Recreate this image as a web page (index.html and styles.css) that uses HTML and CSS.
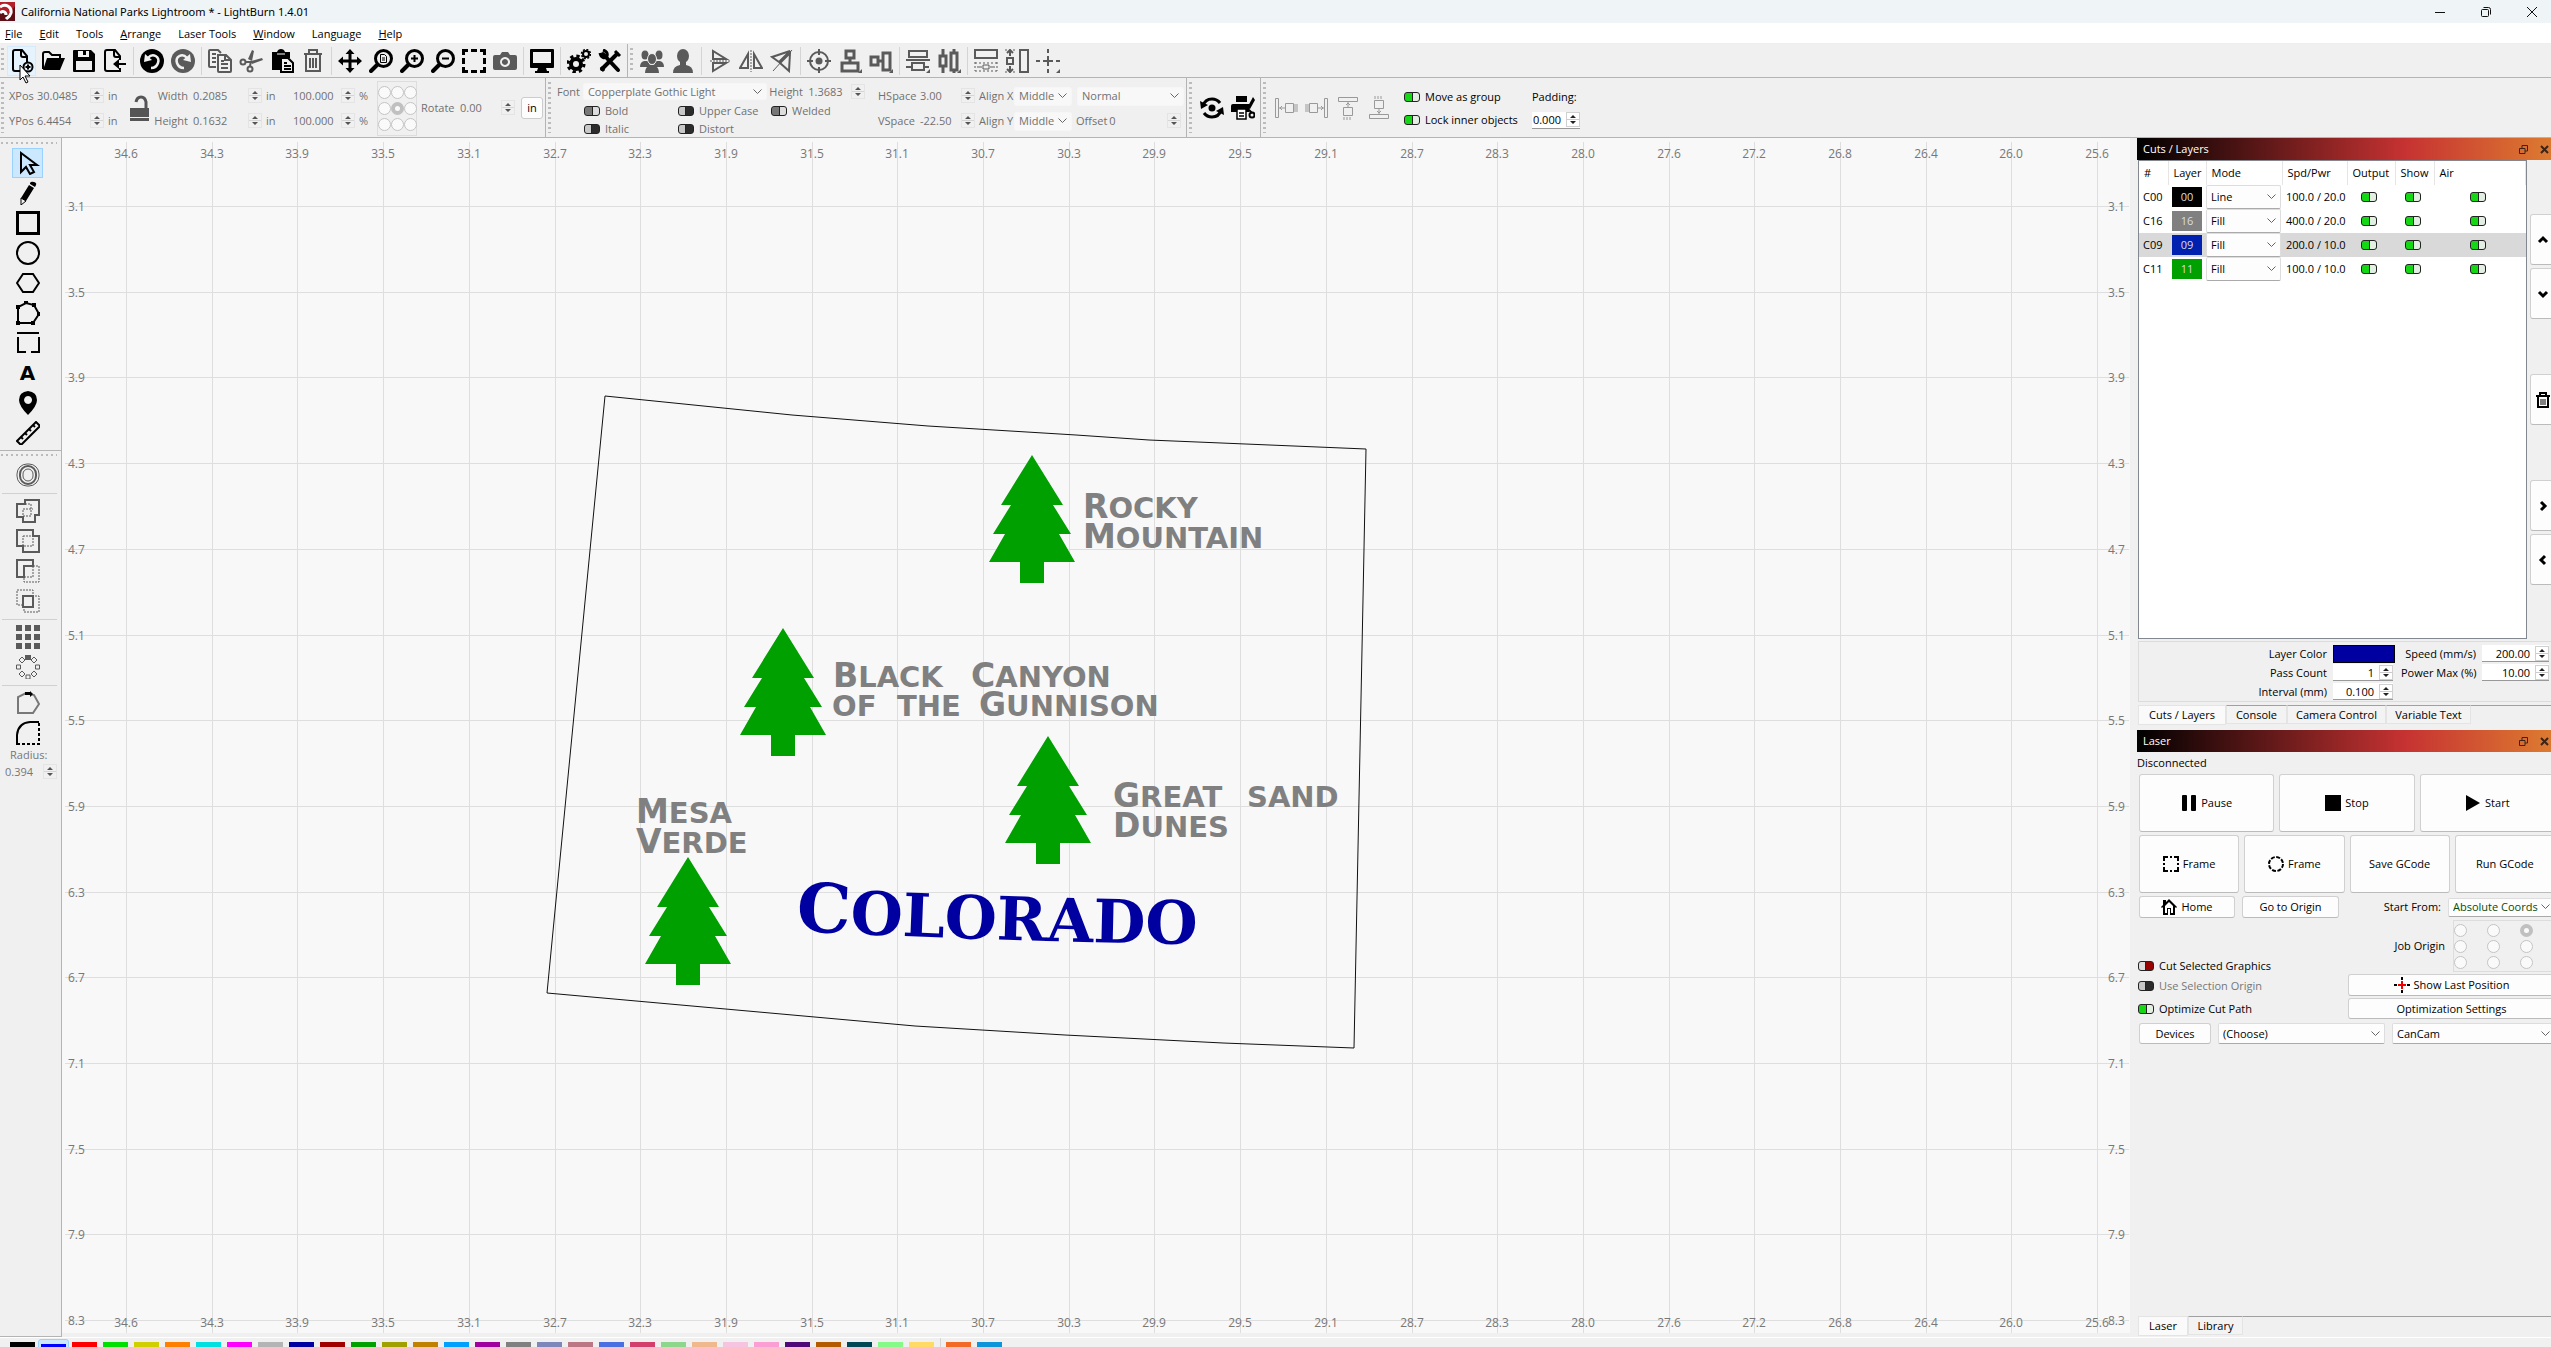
FILE: index.html
```html
<!DOCTYPE html>
<html lang="en">
<head>
<meta charset="utf-8">
<title>California National Parks Lightroom * - LightBurn 1.4.01</title>
<link rel="stylesheet" href="styles.css">
</head>
<body>
<div class="app">
  <header class="titlebar">
    <svg class="logo" width="15" height="19" viewBox="0 0 15 19"><path fill="#b3202c" d="M0 0h15v19H0z"/><path fill="#5e0f17" d="M0 10l8 3 7-9v15H0z"/><path fill="none" stroke="#fff" stroke-width="3" d="M0 5c6-4 12 0 11 6-1 4-4 5-5 6M0 11c3-3 6-1 6 2"/></svg>
    <h1 class="title">California National Parks Lightroom * - LightBurn 1.4.01</h1>
    <div class="winctl">
      <button aria-label="Minimize"><svg width="12" height="12" viewBox="0 0 12 12"><path stroke="#111" d="M1 6.5h10"/></svg></button>
      <button aria-label="Restore"><svg width="12" height="12" viewBox="0 0 12 12" fill="none" stroke="#111"><rect x="1.5" y="3.5" width="7" height="7" rx="1"/><path d="M3.500 1.500h5a2 2 0 0 1 2 2v5"/></svg></button>
      <button aria-label="Close"><svg width="12" height="12" viewBox="0 0 12 12"><path stroke="#111" d="M1 1l10 10M11 1L1 11"/></svg></button>
    </div>
  </header>

  <nav class="menubar">
    <a href="#"><u>F</u>ile</a><a href="#"><u>E</u>dit</a><a href="#">Tools</a><a href="#"><u>A</u>rrange</a><a href="#">Laser Tools</a><a href="#"><u>W</u>indow</a><a href="#">Language</a><a href="#"><u>H</u>elp</a>
  </nav>

  <div class="toolbar">
    <div class="group">
      <i class="grip"></i>
      <button class="tool hot" aria-label="New"><svg viewBox="0 0 24 24"><path class="ln" d="M12 22H5a2 2 0 0 1-2-2V3a2 2 0 0 1 2-2h7l5 6v6M11 1v5a2 2 0 0 0 2 2h4"/><circle class="ln" cx="18" cy="18" r="4.500"/><path class="ln" d="M18 15.500v5M15.500 18h5"/></svg></button>
      <button class="tool" aria-label="Open"><svg viewBox="0 0 24 24"><path class="ln" d="M2 20V5q0-2 2-2h4l3 3h8v4"/><path d="M2 21L6 9h18l-5 12z"/></svg></button>
      <button class="tool" aria-label="Save"><svg viewBox="0 0 24 24"><path fill-rule="evenodd" d="M2 1h17l4 4v17q0 1-1 1H2q-1 0-1-1V2q0-1 1-1zM6 2v6h11V2h-3v4h-3V2zM4 12v9h16v-9z"/></svg></button>
      <button class="tool" aria-label="Export"><svg viewBox="0 0 24 24"><path class="ln" d="M17 11V7l-5-6H4a2 2 0 0 0-2 2v17a2 2 0 0 0 2 2h13v-3M11 1v5a2 2 0 0 0 2 2h4"/><path d="M23 14h-7v-4l-6 5 6 5v-4h7z"/></svg></button>
      <i class="sep"></i>
      <button class="tool" aria-label="Undo"><svg viewBox="0 0 24 24"><circle cx="12" cy="12" r="12"/><path fill="none" stroke="#f0f0f0" stroke-width="2.500" d="M8 9c5-6 12-1 10 5-1 3-4 5-7 5"/><path fill="#f0f0f0" d="M4 13l1-8 7 6z"/></svg></button>
      <button class="tool dim" aria-label="Redo"><svg viewBox="0 0 24 24"><circle cx="12" cy="12" r="12"/><path fill="none" stroke="#f0f0f0" stroke-width="2.500" d="M16 9C11 3 4 8 6 14c1 3 4 5 7 5"/><path fill="#f0f0f0" d="M20 13l-1-8-7 6z"/></svg></button>
      <i class="sep"></i>
      <button class="tool dim" aria-label="Copy"><svg viewBox="0 0 24 24"><path class="ln" d="M8 18H2a1 1 0 0 1-1-1V2a1 1 0 0 1 1-1h8l3 3M4 5h4M4 9h4M4 13h4M10 6h8l5 5v11a1 1 0 0 1-1 1H11a1 1 0 0 1-1-1zM17 6v5h5M13 12h3M13 15h7M13 19h7"/></svg></button>
      <button class="tool dim" aria-label="Cut"><svg viewBox="0 0 24 24"><circle class="ln" cx="4" cy="13" r="2.500"/><circle class="ln" cx="11" cy="20" r="2.500"/><path class="ln" d="M6 13l7 0M11 17l1-5"/><path d="M9 10L13 1l2 1-2 10zM12 12l11-3 1 2-11 4z"/></svg></button>
      <button class="tool" aria-label="Paste"><svg viewBox="0 0 24 24"><path d="M2 3h5q1-3 4-3t4 3h5v6h-9v12H2z"/><path fill="#f0f0f0" stroke="#000" stroke-width="2" d="M11 9h7l5 5v9H11z"/><path class="ln" d="M14 14h3M14 17h7M14 20h7"/><path stroke="#fff" d="M7 5h8"/></svg></button>
      <button class="tool dim" aria-label="Delete"><svg viewBox="0 0 24 24"><path class="ln" d="M3 5h18M8 4V1h8v3M5 6v16h14V6M9 9v10M12 9v10M15 9v10"/></svg></button>
      <i class="sep"></i>
      <button class="tool" aria-label="Pan"><svg viewBox="0 0 24 24"><path d="M12 0l4.500 5H13.500v5.500H19V7.500l5 4.500-5 4.500v-3h-5.500V19h3L12 24l-4.500-5h3v-5.500H5v3L0 12l5-4.500v3h5.500V5h-3z"/></svg></button>
      <button class="tool" aria-label="Zoom to page"><svg viewBox="0 0 24 24"><circle class="ln3" cx="14.500" cy="9.500" r="8"/><path class="ln4" d="M8 16l-6 6"/><path class="ln1" d="M11.500 5.500h4l2 2v6h-6zM13 9h3M13 11h3"/></svg></button>
      <button class="tool" aria-label="Zoom in"><svg viewBox="0 0 24 24"><circle class="ln3" cx="14.500" cy="9.500" r="8"/><path class="ln4" d="M8 16l-6 6"/><path class="ln" d="M14.500 6v7M11 9.500h7"/></svg></button>
      <button class="tool" aria-label="Zoom out"><svg viewBox="0 0 24 24"><circle class="ln3" cx="14.500" cy="9.500" r="8"/><path class="ln4" d="M8 16l-6 6"/><path class="ln" d="M11 9.500h7"/></svg></button>
      <button class="tool" aria-label="Frame selection"><svg viewBox="0 0 24 24"><path class="ln3" d="M1.500 6V1.500H6M18 1.500h4.500V6M22.500 18v4.500H18M6 22.500H1.500V18M9 1.500h6M9 22.500h6M1.500 9v6M22.500 9v6"/></svg></button>
      <button class="tool dim" aria-label="Camera capture"><svg viewBox="0 0 24 24"><path fill-rule="evenodd" d="M2 6h5l2-3h6l2 3h5q2 0 2 2v11q0 2-2 2H2q-2 0-2-2V8q0-2 2-2zm10 2a5 5 0 1 0 .1 0zm0 2a3 3 0 1 1-.1 0z"/></svg></button>
      <i class="sep"></i>
      <button class="tool" aria-label="Preview"><svg viewBox="0 0 24 24"><path fill-rule="evenodd" d="M1 0h22q1 0 1 1v17q0 1-1 1h-7l1 3h2v2H5v-2h2l1-3H1q-1 0-1-1V1q0-1 1-1zm2 3v11h18V3z"/></svg></button>
      <i class="sep"></i>
      <button class="tool" aria-label="Settings"><svg viewBox="0 0 24 24"><circle cx="9" cy="15" r="5" fill="none" stroke="#000" stroke-width="4"/><circle cx="9" cy="15" r="8" fill="none" stroke="#000" stroke-width="3" stroke-dasharray="3.300 3"/><circle cx="19" cy="5" r="3" class="ln"/><circle cx="19" cy="5" r="4.500" fill="none" stroke="#000" stroke-width="1.500" stroke-dasharray="2 1.500"/></svg></button>
      <button class="tool" aria-label="Device settings"><svg viewBox="0 0 24 24"><path class="ln4" d="M5 5l15 16M19 5L4 20"/><path class="ln3" d="M2 4c1 5 5 6 7 3 1-3-1-5-4-6"/><path class="ln3" d="M17 2l5 5M3 18l3 4"/></svg></button>
    </div>
    <div class="group">
      <i class="grip"></i>
      <button class="tool dim" aria-label="Group"><svg viewBox="0 0 24 24"><ellipse cx="5" cy="6" rx="3.500" ry="4.500"/><ellipse cx="19" cy="6" rx="3.500" ry="4.500"/><path d="M0 18q0-5 4-6l4 0 3 6zM24 18q0-5-4-6l-4 0-3 6z"/><ellipse cx="12" cy="10" rx="4.500" ry="5.500" stroke="#f0f0f0"/><path d="M5 24q0-6 5-8h4q5 2 5 8z"/></svg></button>
      <button class="tool dim" aria-label="Ungroup"><svg viewBox="0 0 24 24"><ellipse cx="12" cy="7" rx="6" ry="7"/><path d="M2 24q0-7 7-8V12h6v4q7 1 7 8z"/></svg></button>
      <i class="sep"></i>
      <button class="tool dim" aria-label="Flip vertical"><svg viewBox="0 0 24 24"><path class="ln" d="M5 2v8h13zM5 22v-8h13z"/><path class="ln1" stroke-dasharray="2 1" d="M2 12h20"/></svg></button>
      <button class="tool dim" aria-label="Flip horizontal"><svg viewBox="0 0 24 24"><path class="ln" d="M1 19h8V5zM23 19h-8V5z"/><path class="ln1" stroke-dasharray="2 1" d="M12 1v22"/></svg></button>
      <button class="tool dim" aria-label="Mirror across line"><svg viewBox="0 0 24 24"><path class="ln" d="M2 8L20 2 9 13zM20 4l-1 18-9-8z"/><path class="ln1" d="M3 22L22 1"/></svg></button>
      <i class="sep"></i>
      <button class="tool dim" aria-label="Align centers"><svg viewBox="0 0 24 24"><circle class="ln" cx="12" cy="12" r="9"/><circle cx="12" cy="12" r="3.500"/><path class="ln" d="M12 0v6M12 18v6M0 12h6M18 12h6"/></svg></button>
      <button class="tool dim" aria-label="Align vertical centers"><svg viewBox="0 0 24 24"><path class="ln3" d="M8 2h8v7H8zM4 14h16v8H4zM12 9v5"/><path d="M24 20v4h-4z"/></svg></button>
      <button class="tool dim" aria-label="Align horizontal centers"><svg viewBox="0 0 24 24"><path class="ln3" d="M2 8h7v8H2zM14 4h7v17h-7zM9 12h5"/><path d="M24 20v4h-4z"/></svg></button>
      <i class="sep"></i>
      <button class="tool dim" aria-label="Distribute vertically"><svg viewBox="0 0 24 24"><path class="ln" d="M3 2h18v6H3zM6 14h12v7H6zM0 11h24M0 18h6M18 18h5"/><path d="M24 20v4h-4z"/></svg></button>
      <button class="tool dim" aria-label="Distribute horizontally"><svg viewBox="0 0 24 24"><path class="ln3" d="M3 7h6v10H3zM14 4h6v17h-6zM6 0v7M6 17v7M17 0v4M17 21v3"/><path d="M24 20v4h-4z"/></svg></button>
      <i class="sep"></i>
      <button class="tool dim" aria-label="Make same width"><svg viewBox="0 0 24 24"><path class="ln" d="M1 1h22v8H1z"/><path class="ln1" stroke-dasharray="2 2" d="M1 13v9M23 13v9M1 22h22M1 14h22"/><path class="ln1" d="M9 16h6v4H9zM3 18h5M16 18h5"/></svg></button>
      <button class="tool dim" aria-label="Make same height"><svg viewBox="0 0 24 24"><path class="ln" d="M15 1h8v22h-8z"/><path class="ln" d="M5 1v6M5 17v6M2 9h6v6H2zM2 4l3-3 3 3M2 20l3 3 3-3"/><path class="ln1" stroke-dasharray="2 2" d="M0 1h11M0 23h11"/></svg></button>
      <button class="tool dim" aria-label="Move to position"><svg viewBox="0 0 24 24"><path class="ln" d="M12 0v4M12 20v4M0 12h4M20 12h4M12 7v10M7 12h10"/><path d="M24 20v4h-4z"/></svg></button>
    </div>
  </div>

  <div class="toolbar numeric">
    <div class="group">
      <i class="grip"></i>
      <div class="transform">
        <label for="xpos">XPos</label><span class="num off"><input id="xpos" value="30.0485"><i class="step"></i></span><span class="unit">in</span>
        <button class="lock" aria-label="Lock aspect"><svg width="20" height="26" viewBox="0 0 20 26"><path fill="none" stroke="#555" stroke-width="3" d="M6 7q1-5 5-5t5 5v6"/><path fill="#555" d="M0 13h19v9H0zM0 23h19v3H0z"/></svg></button>
        <label class="r" for="wid">Width</label><span class="num off pad"><input id="wid" value="0.2085"><i class="step"></i></span><span class="unit">in</span>
        <span class="num off"><input aria-label="Width percent" value="100.000"><i class="step"></i></span><span class="unit">%</span>
        <fieldset class="anchor"><input type="radio" name="a" aria-label="Top left"><input type="radio" name="a" aria-label="Top"><input type="radio" name="a" aria-label="Top right"><input type="radio" name="a" aria-label="Left"><input type="radio" name="a" aria-label="Center" checked><input type="radio" name="a" aria-label="Right"><input type="radio" name="a" aria-label="Bottom left"><input type="radio" name="a" aria-label="Bottom"><input type="radio" name="a" aria-label="Bottom right"></fieldset>
        <label class="rot" for="rot">Rotate</label><span class="num off tall"><input id="rot" value="0.00"><i class="step"></i></span>
        <button class="inch">in</button>
        <label class="c1" for="ypos">YPos</label><span class="num off"><input id="ypos" value="6.4454"><i class="step"></i></span><span class="unit">in</span>
        <label class="c5 r" for="hei">Height</label><span class="num off pad"><input id="hei" value="0.1632"><i class="step"></i></span><span class="unit">in</span>
        <span class="num off"><input aria-label="Height percent" value="100.000"><i class="step"></i></span><span class="unit">%</span>
      </div>
    </div>
    <div class="group">
      <i class="grip"></i>
      <div class="fontbox">
        <div class="fontrow"><label for="font">Font</label><select id="font" class="wide"><option>Copperplate Gothic Light</option></select><label for="fh">Height</label><span class="num off"><input id="fh" value="1.3683"><i class="step"></i></span></div>
        <div class="switches">
          <label><input type="checkbox" class="sw half" checked>Bold</label><label><input type="checkbox" class="sw">Upper Case</label><label><input type="checkbox" class="sw half" checked>Welded</label>
          <label><input type="checkbox" class="sw">Italic</label><label><input type="checkbox" class="sw">Distort</label>
        </div>
      </div>
      <div class="spacing">
        <label for="hs">HSpace</label><span class="num off"><input id="hs" value="3.00"><i class="step"></i></span><label for="ax">Align X</label><select id="ax"><option>Middle</option></select><select aria-label="Text mode" class="pad"><option>Normal</option></select>
        <label for="vs">VSpace</label><span class="num off"><input id="vs" value="-22.50"><i class="step"></i></span><label for="ay">Align Y</label><select id="ay"><option>Middle</option></select><span class="offset"><label for="of">Offset</label><span class="num off"><input id="of" value="0"><i class="step"></i></span></span>
      </div>
    </div>
    <div class="group">
      <i class="grip"></i>
      <div class="pair">
        <button class="tool" aria-label="Rotary"><svg viewBox="0 0 24 24"><circle cx="12" cy="12" r="3.500"/><path class="ln3" d="M3 10q2-7 9-7 5 0 8 4M21 14q-2 7-9 7-5 0-8-4"/><path d="M0 5l1 8 7-4zM24 19l-1-8-7 4z"/></svg></button>
        <button class="tool" aria-label="Print and cut"><svg viewBox="0 0 24 24"><path d="M5 0h11v6H5zM2 8h16v8H0v-6q0-2 2-2z"/><path fill="#fff" stroke="#000" stroke-width="1.500" d="M6 13h9v10H6zM8 17h5M8 20h5"/><path d="M22 1l2 3-5 9-3-1z"/><path class="ln" d="M17 13l4 4"/><circle class="ln" cx="21" cy="19" r="2.500"/></svg></button>
      </div>
    </div>
    <div class="group dock">
      <i class="grip"></i>
      <div class="aligns">
        <button class="tool faint" aria-label="Move to left"><svg viewBox="0 0 24 24"><path class="ln1" d="M1.500 2.500h3v19h-3zM11.500 7.500h8v9h-8zM5 12h6M6 12l2-2M6 12l2 2M21 8v8M23 8v8"/></svg></button>
        <button class="tool faint" aria-label="Move to right"><svg viewBox="0 0 24 24"><path class="ln1" d="M19.500 2.500h3v19h-3zM4.500 7.500h8v9h-8zM13 12h6M18 12l-2-2M18 12l-2 2M3 8v8M1 8v8"/></svg></button>
        <button class="tool faint" aria-label="Move to top"><svg viewBox="0 0 24 24"><path class="ln1" d="M2.500 1.500h19v4h-19zM7.500 11.500h9v8h-9zM12 6v5M12 7l-2 2M12 7l2 2M8 21v3M11 21v3M14 21v3"/></svg></button>
        <button class="tool faint" aria-label="Move to bottom"><svg viewBox="0 0 24 24"><path class="ln1" d="M2.500 18.500h19v4h-19zM7.500 4.500h9v8h-9zM12 13v5M12 17l-2-2M12 17l2-2M8 0v3M11 0v3M14 0v3"/></svg></button>
      </div>
      <div class="groupopts">
        <label><input type="checkbox" class="sw on" checked>Move as group</label>
        <label><input type="checkbox" class="sw on" checked>Lock inner objects</label>
      </div>
      <div class="padding"><label for="pd">Padding:</label><span class="num"><input id="pd" value="0.000"><i class="step"></i></span></div>
    </div>
  </div>

  <main class="work">
    <aside class="palette">
      <i class="hgrip"></i>
      <button class="tool active" aria-label="Select"><svg viewBox="0 0 24 24"><path class="ln" d="M5 2v19l5-5 4 7 4-2-4-7h7z"/></svg></button>
      <button class="tool" aria-label="Draw lines"><svg viewBox="0 0 24 24"><path d="M13 4l5 3-8 13-5-3zM14 2q1-2 4-1 3 1 2 3l-1 2-5-3z"/><path class="ln1" d="M5 17l5 3-5 4z"/></svg></button>
      <button class="tool" aria-label="Rectangle"><svg viewBox="0 0 24 24"><path class="ln3" d="M1.500 1.500h21v21h-21z"/></svg></button>
      <button class="tool" aria-label="Ellipse"><svg viewBox="0 0 24 24"><ellipse class="ln" cx="12" cy="12" rx="11" ry="11"/></svg></button>
      <button class="tool" aria-label="Polygon"><svg viewBox="0 0 24 24"><path class="ln" d="M1 12l6-9h10l6 9-6 9H7z"/></svg></button>
      <button class="tool" aria-label="Edit nodes"><svg viewBox="0 0 24 24"><path class="ln" d="M2 22V6l8-4 8 2 5 9-6 9z"/><path d="M0 4h4v4H0zM8 0h4v3H8zM16 2h4v4h-4zM21 11h3v4h-3zM0 20h4v4H0zM15 20h4v4h-4z"/></svg></button>
      <button class="tool" aria-label="Edit tabs"><svg viewBox="0 0 24 24"><path class="ln" d="M1 2h22M2 6v15h8M23 6v15h-8"/></svg></button>
      <button class="tool glyph" aria-label="Text">A</button>
      <button class="tool" aria-label="Position laser"><svg viewBox="0 0 24 24"><path fill-rule="evenodd" d="M12 0q9 1 9 9 0 6-9 15Q3 15 3 9q0-8 9-9zm0 5a4 4 0 1 0 .1 0z"/></svg></button>
      <button class="tool" aria-label="Measure"><svg viewBox="0 0 24 24"><path class="ln1 thick" d="M1 20L20 1l4 4L5 24zM5 16l2 2M9 12l2 2M13 8l2 2M17 4l2 2"/></svg></button>
      <i class="rule"></i>
      <i class="hgrip low"></i>
      <button class="tool dim" aria-label="Offset"><svg viewBox="0 0 24 24"><rect class="ln1" x="1" y="1" width="22" height="22" rx="10"/><rect class="ln" x="4" y="3" width="16" height="18" rx="8"/><rect class="ln1" x="7" y="6" width="10" height="12" rx="5"/></svg></button>
      <i class="hsep"></i>
      <button class="tool dim" aria-label="Boolean union"><svg viewBox="0 0 24 24"><path class="ln" d="M9 1h14v15h-4v7H7v-5H1V5h8z"/><path class="ln1" stroke-dasharray="2 1" d="M9 5h6v12H7v-7h10"/></svg></button>
      <button class="tool dim" aria-label="Boolean weld"><svg viewBox="0 0 24 24"><path class="ln" d="M1 1h16v6h6v16H7v-6H1z"/><path class="ln1" stroke-dasharray="2 1" d="M7 7h10v10H7z"/></svg></button>
      <button class="tool dim" aria-label="Boolean subtract"><svg viewBox="0 0 24 24"><path class="ln" d="M1 1h16v6H8v11H1z"/><path class="ln1" stroke-dasharray="2 1" d="M17 7h6v16H8v-5h9z"/></svg></button>
      <button class="tool dim" aria-label="Boolean intersect"><svg viewBox="0 0 24 24"><path class="ln" d="M7 7h10v11H7z"/><path class="ln1" stroke-dasharray="2 1" d="M7 16H1V1h16v6h6v16H8v-5"/></svg></button>
      <i class="hsep"></i>
      <button class="tool dim" aria-label="Grid array"><svg viewBox="0 0 24 24"><path d="M0 0h6v6H0zM9 0h6v6H9zM18 0h6v6h-6zM0 9h6v6H0zM9 9h6v6H9zM18 9h6v6h-6zM0 18h6v6H0zM9 18h6v6H9zM18 18h6v6h-6z"/></svg></button>
      <button class="tool dim" aria-label="Circular array"><svg viewBox="0 0 24 24"><path d="M9 0h6v5H9z"/><path class="ln1" d="M10 20h4v4h-4zM.500 10h4v4h-4zM19.500 10h4v4h-4zM6 2l3 3-3 3-3-3zM18 2l3 3-3 3-3-3zM6 16l3 3-3 3-3-3zM18 16l3 3-3 3-3-3z"/></svg></button>
      <i class="hsep"></i>
      <button class="tool dim" aria-label="Start point"><svg viewBox="0 0 24 24"><path class="ln" opacity=".8" d="M2 22V6l8-4 8 2 5 9-6 9z"/><path fill="#000" d="M9 1h5V0l3 3-3 3V4H9z"/></svg></button>
      <button class="tool" aria-label="Radius tool"><svg viewBox="0 0 24 24"><path class="ln" d="M1 24V14Q2 2 14 1h9"/><path class="ln" stroke-dasharray="3 2" d="M23 2v21H2"/></svg></button>
      <label class="radius" for="rad">Radius:</label>
      <span class="num off"><input id="rad" value="0.394"><i class="step"></i></span>
    </aside>

    <section class="canvas">
      <svg id="sheet" width="100%" height="100%">
        <g id="grid"></g>
        <g transform="translate(478 242)">
          <path class="outline" d="M65 16L252 35 388 46 536 55 609 60 826 69 823 219 814 668 683 663 525 655 375 646 7 613z"/>
          <g class="tree">
            <path id="tree" transform="translate(492 75)" d="M0 0L31 50H21L39 79H27L43 107H12V128H-12V107H-43L-27 79H-39L-21 50H-31z"/>
            <use href="#tree" x="-249" y="173"/>
            <use href="#tree" x="16" y="281"/>
            <use href="#tree" x="-344" y="402"/>
          </g>
          <g class="park">
            <text x="543" y="138">R<tspan>OCKY</tspan></text>
            <text x="543" y="168">M<tspan>OUNTAIN</tspan></text>
            <text x="293" y="307">B<tspan>LACK</tspan></text>
            <text x="431" y="307">C<tspan>ANYON</tspan></text>
            <text x="292" y="336"><tspan>OF</tspan></text>
            <text x="357" y="336"><tspan>THE</tspan></text>
            <text x="439" y="336">G<tspan>UNNISON</tspan></text>
            <text x="96" y="443">M<tspan>ESA</tspan></text>
            <text x="96" y="473">V<tspan>ERDE</tspan></text>
            <text x="573" y="427">G<tspan>REAT</tspan></text>
            <text x="707" y="427"><tspan>SAND</tspan></text>
            <text x="573" y="457">D<tspan>UNES</tspan></text>
          </g>
          <path id="arc" fill="none" d="M256 551Q440 561 700 565"/>
          <text class="state"><textPath href="#arc">C<tspan>OLORADO</tspan></textPath></text>
        </g>
      </svg>
    </section>

    <aside class="docks"><div class="inner">
      <h2 class="docktitle">Cuts / Layers<span><svg width="9" height="9" viewBox="0 0 9 9" fill="none" stroke="#3a2418"><path d="M3 3V.500h5.500V6H6M.500 3.500H6v5H.500z"/></svg><svg width="9" height="9" viewBox="0 0 9 9"><path stroke="#3a2418" stroke-width="2" d="M1 1l7 7M8 1L1 8"/></svg></span></h2>
      <div class="cuts">
        <div class="tablebox">
          <table>
            <colgroup><col class="k1"><col class="k2"><col class="k3"><col class="k4"><col class="k5"><col class="k6"><col></colgroup>
            <thead><tr><th>#</th><th>Layer</th><th>Mode</th><th>Spd/Pwr</th><th>Output</th><th>Show</th><th>Air</th></tr></thead>
            <tbody>
              <tr><td>C00</td><td><b class="chip c00">00</b></td><td><select aria-label="C00 mode"><option>Line</option></select></td><td>100.0 / 20.0</td><td><input type="checkbox" class="sw on" aria-label="Output" checked></td><td><input type="checkbox" class="sw on" aria-label="Show" checked></td><td><input type="checkbox" class="sw on" aria-label="Air" checked></td></tr>
              <tr><td>C16</td><td><b class="chip c16">16</b></td><td><select aria-label="C16 mode"><option>Fill</option></select></td><td>400.0 / 20.0</td><td><input type="checkbox" class="sw on" aria-label="Output" checked></td><td><input type="checkbox" class="sw on" aria-label="Show" checked></td><td><input type="checkbox" class="sw on" aria-label="Air" checked></td></tr>
              <tr class="sel"><td>C09</td><td><b class="chip c09">09</b></td><td><select aria-label="C09 mode"><option>Fill</option></select></td><td>200.0 / 10.0</td><td><input type="checkbox" class="sw on" aria-label="Output" checked></td><td><input type="checkbox" class="sw on" aria-label="Show" checked></td><td><input type="checkbox" class="sw on" aria-label="Air" checked></td></tr>
              <tr><td>C11</td><td><b class="chip c11">11</b></td><td><select aria-label="C11 mode"><option>Fill</option></select></td><td>100.0 / 10.0</td><td><input type="checkbox" class="sw on" aria-label="Output" checked></td><td><input type="checkbox" class="sw on" aria-label="Show" checked></td><td><input type="checkbox" class="sw on" aria-label="Air" checked></td></tr>
            </tbody>
          </table>
        </div>
        <div class="side">
          <button class="btn" aria-label="Move up"><svg viewBox="0 0 12 12"><path class="ln3" d="M2 8l4-4 4 4"/></svg></button>
          <button class="btn" aria-label="Move down"><svg viewBox="0 0 12 12"><path class="ln3" d="M2 4l4 4 4-4"/></svg></button>
          <button class="btn mid" aria-label="Delete layer"><svg class="bin" viewBox="0 0 14 16"><path fill="none" stroke="#000" stroke-width="2" d="M0 4h14M4 3V1h6v2M2 5v10h10V5"/><path stroke="#000" d="M5 7v6M7 7v6M9 7v6"/></svg></button>
          <button class="btn mid" aria-label="Assign"><svg viewBox="0 0 12 12"><path class="ln3" d="M4 2l4 4-4 4"/></svg></button>
          <button class="btn" aria-label="Collect"><svg viewBox="0 0 12 12"><path class="ln3" d="M8 2L4 6l4 4"/></svg></button>
        </div>
      </div>
      <div class="params">
        <span>Layer Color</span><button class="colour" aria-label="Layer color"></button><label for="sp">Speed (mm/s)</label><span class="num"><input id="sp" value="200.00"><i class="step"></i></span>
        <label for="pc">Pass Count</label><span class="num"><input id="pc" value="1"><i class="step"></i></span><label for="pm">Power Max (%)</label><span class="num"><input id="pm" value="10.00"><i class="step"></i></span>
        <label for="iv">Interval (mm)</label><span class="num"><input id="iv" value="0.100"><i class="step"></i></span>
      </div>
      <div class="tabs four"><button class="cur">Cuts / Layers</button><button>Console</button><button>Camera Control</button><button>Variable Text</button><i></i></div>

      <h2 class="docktitle">Laser<span><svg width="9" height="9" viewBox="0 0 9 9" fill="none" stroke="#3a2418"><path d="M3 3V.500h5.500V6H6M.500 3.500H6v5H.500z"/></svg><svg width="9" height="9" viewBox="0 0 9 9"><path stroke="#3a2418" stroke-width="2" d="M1 1l7 7M8 1L1 8"/></svg></span></h2>
      <p class="status">Disconnected</p>
      <div class="big three">
        <button class="btn"><svg viewBox="0 0 16 16"><rect x="1" width="5" height="16" rx="1"/><rect x="10" width="5" height="16" rx="1"/></svg>Pause</button>
        <button class="btn"><svg viewBox="0 0 16 16"><path d="M0 0h16v16H0z"/></svg>Stop</button>
        <button class="btn"><svg viewBox="0 0 16 16"><path d="M1 0l14 8-14 8z"/></svg>Start</button>
      </div>
      <div class="big quad">
        <button class="btn"><svg viewBox="0 0 16 16"><path class="ln" d="M1 5V1h4M11 1h4v4M15 11v4h-4M5 15H1v-4M7 1h2M7 15h2M1 7v2M15 7v2"/></svg>Frame</button>
        <button class="btn"><svg viewBox="0 0 16 16"><circle class="ln" cx="8" cy="8" r="7" stroke-dasharray="4 1.500"/></svg>Frame</button>
        <button class="btn">Save GCode</button>
        <button class="btn">Run GCode</button>
      </div>
      <div class="origin">
        <button class="btn"><svg viewBox="0 0 16 16"><path d="M8 0l8 8-1 1-1-1v8H9v-6H7v6H2V8L1 9 0 8l2-2V1h3v2z"/><path fill="#fff" d="M4 7l4-4 4 4v7h-2V9H6v5H4z"/></svg>Home</button>
        <button class="btn">Go to Origin</button>
        <label for="sf">Start From:</label>
        <select id="sf" class="green"><option>Absolute Coords</option></select>
      </div>
      <div class="job">
        <div class="jobleft">
          <label><input type="checkbox" class="sw red">Cut Selected Graphics</label>
          <label class="muted"><input type="checkbox" class="sw">Use Selection Origin</label>
          <label><input type="checkbox" class="sw on" checked>Optimize Cut Path</label>
        </div>
        <div class="jobright">
          <div class="jobo"><span>Job Origin</span><fieldset class="anchor loose"><input type="radio" name="j" aria-label="Back left"><input type="radio" name="j" aria-label="Back"><input type="radio" name="j" aria-label="Back right" checked><input type="radio" name="j" aria-label="Left"><input type="radio" name="j" aria-label="Center"><input type="radio" name="j" aria-label="Right"><input type="radio" name="j" aria-label="Front left"><input type="radio" name="j" aria-label="Front"><input type="radio" name="j" aria-label="Front right"></fieldset></div>
          <button class="btn"><svg viewBox="0 0 16 16"><path class="ln" d="M8 0v3M8 13v3M0 8h3M13 8h3"/><path stroke="#e00" stroke-width="2" d="M8 4v8M4 8h8"/></svg>Show Last Position</button>
          <button class="btn">Optimization Settings</button>
        </div>
      </div>
      <div class="devices">
        <button class="btn">Devices</button>
        <select aria-label="Port"><option>(Choose)</option></select>
        <select aria-label="Device"><option>CanCam</option></select>
      </div>
      <div class="tabs two"><button class="cur">Laser</button><button>Library</button><i></i></div>
    </div></aside>
  </main>

  <footer class="swatches" id="swatches"></footer>
  <svg class="cursor" width="12" height="20" viewBox="0 0 12 20"><path fill="#fff" stroke="#000" d="M1 1v15l3-3 3 6 2-1-3-6h5z"/></svg>
</div>
<script src="canvas.js"></script>
</body>
</html>
```
FILE: canvas.js
```js
// Ruler ticks: the labels are in inches, rounded from an even metric grid.
const STEP = 85.7;
const FIRST_X = 64;
const FIRST_Y = 68;
const BOTTOM = 1184;
const cols = "34.6 34.3 33.9 33.5 33.1 32.7 32.3 31.9 31.5 31.1 30.7 30.3 29.9 29.5 29.1 28.7 28.3 28.0 27.6 27.2 26.8 26.4 26.0 25.6".split(" ");
const rows = "3.1 3.5 3.9 4.3 4.7 5.1 5.5 5.9 6.3 6.7 7.1 7.5 7.9 8.3".split(" ");
const lastX = Math.round(FIRST_X + STEP * (cols.length - 1));

const parts = [];
cols.forEach((label, i) => {
  const x = Math.round(FIRST_X + i * STEP);
  parts.push(`<line x1="${x}.5" x2="${x}.5" y1="4" y2="1195"/>`);
});
rows.forEach((label, i) => {
  const y = Math.round(FIRST_Y + i * STEP);
  parts.push(`<line x1="3" x2="${lastX + 32}" y1="${y}.5" y2="${y}.5"/>`);
});
cols.forEach((label, i) => {
  const x = Math.round(FIRST_X + i * STEP);
  parts.push(`<text x="${x}" y="20" text-anchor="middle">${label}</text>`);
  parts.push(`<text x="${x}" y="${BOTTOM + 5}" text-anchor="middle">${label}</text>`);
});
rows.forEach((label, i) => {
  const y = Math.round(FIRST_Y + i * STEP) + 5;
  parts.push(`<text x="6" y="${y}">${label}</text>`);
  parts.push(`<text x="${lastX + 11}" y="${y}">${label}</text>`);
});
document.getElementById("grid").innerHTML = parts.join("");

const colours = "000000 0000ff ff0000 00e000 d0d000 ff8000 00e0e0 ff00ff b4b4b4 0000a0 a00000 00a000 a0a000 c08000 00a0ff a000a0 808080 7d87b9 bb7784 4a6fe3 d33f6a 8cd78c f0b98d f6c4e1 fa9ed4 500a78 b45a00 004754 86fa88 ffdb66 f36926 0c96d9".split(" ");
document.getElementById("swatches").innerHTML = colours.map((c, i) =>
  (i === 30 ? '<i class="sep"></i>' : "") +
  `<button class="swatch${i === 1 ? " picked" : ""}" aria-label="Layer ${i}"><i style="background:#${c}"></i></button>`
).join("");
```
FILE: styles.css
```css
* { box-sizing: border-box; }
body { margin: 0; overflow: hidden; background: #f0f0f0; color: #000; font: 11px/14px "Open Sans", "Noto Sans", sans-serif; }
button, input, select { font: inherit; color: inherit; margin: 0; padding: 0; border: 0; background: none; min-width: 0; }
fieldset { margin: 0; padding: 0; border: 1px solid #ddd; min-width: 0; }
h1, h2, p { margin: 0; font: inherit; }
.app { display: flex; flex-direction: column; height: 100vh; position: relative; overflow: hidden; }

.titlebar { display: flex; align-items: center; height: 23px; background: #eff4f7; flex: none; }
.title { margin-left: 6px; font-family: "Noto Sans", sans-serif; }
.winctl { margin-left: auto; margin-right: -4px; display: flex; }
.winctl button { width: 46px; height: 21px; display: grid; place-items: center; }
.menubar { display: flex; gap: 17px; height: 21px; padding: 1px 5px 0; align-items: center; background: #fff; border-bottom: 1px solid #eee; flex: none; }
.menubar a { color: #000; text-decoration: none; }

.toolbar { display: flex; height: 34px; border-bottom: 1px solid #b4b4b4; flex: none; }
.toolbar .group { display: flex; align-items: center; padding-right: 2px; border-right: 1px solid #b4b4b4; }
.toolbar .group:last-child { border-right: 0; }
.grip { width: 3px; margin: 4px 2px; align-self: stretch; background: repeating-linear-gradient(#bbb 0 2px, transparent 2px 5px); }
.group:first-child .grip { margin-left: 1px; }
.toolbar:not(.numeric) .group + .group .grip { margin-right: 3px; }
.sep { width: 1px; height: 28px; margin: 0 2px 0 3px; background: #d4d4d4; }
.tool { width: 31px; height: 30px; display: grid; place-items: center; border: 1px solid transparent; flex: none; }
.tool svg { width: 24px; height: 24px; display: block; }
.hot { background: #e5f3ff; border-color: #d5eafc; width: 29px; margin: 0 1px; }
.ln, .ln1, .ln3, .ln4 { fill: none; stroke: #000; stroke-width: 2; }
.ln1 { stroke-width: 1; }
.thick { stroke-width: 2; }
.ln3 { stroke-width: 3; }
.ln4 { stroke-width: 4; stroke-linecap: round; }
.dim svg { fill: #5a5a5a; }
.dim .ln, .dim .ln1, .dim .ln3 { stroke: #5a5a5a; }
.faint .ln1 { stroke: #999; }

.numeric { height: 60px; color: #707070; }
.num { display: flex; align-items: center; height: 17px; min-width: 0; background: #fff; border-bottom: 1px solid #999; }
.num input { flex: 1; width: 0; text-align: right; padding-right: 5px; height: 16px; }
.num.off { background: none; border-color: transparent; }
.num.off input { text-align: left; }
.step { width: 14px; height: 15px; flex: none; border: 1px solid #d0d0d0; background: url("data:image/svg+xml,%3Csvg xmlns='http://www.w3.org/2000/svg' width='12' height='13'%3E%3Cpath d='M3 5l3-3 3 3zM3 8l3 3 3-3z' fill='%23222'/%3E%3Cpath d='M0 6.500h12' stroke='%23ccc'/%3E%3C/svg%3E") center no-repeat; }
.off .step { opacity: .75; border-color: #e0e0e0; }
select { appearance: none; height: 19px; padding: 0 16px 0 4px; border: 1px solid #ddd; border-bottom-color: #aaa; border-radius: 2px; background: #fdfdfd url("data:image/svg+xml,%3Csvg xmlns='http://www.w3.org/2000/svg' width='9' height='6'%3E%3Cpath d='M.5 .5l4 4 4-4' fill='none' stroke='%23666'/%3E%3C/svg%3E") right 4px center no-repeat; }
.numeric select { border-color: #f6f6f6; background-color: #f8f8f8; }

.transform { display: grid; grid-template-columns: 28px 67px 26px 20px 38px 74px 31px 62px 22px 40px 43px 55px 28px; grid-template-rows: 25px 25px; align-items: center; padding: 1px 0 0 3px; }
.r { text-align: right; }
.pad { margin-left: 5px; }
.unit { padding-left: 4px; }
.lock { grid-row: 1 / 3; grid-column: 4; height: 26px; }
.lock svg { display: block; }
.anchor { grid-row: 1 / 3; grid-column: 10; height: 55px; display: grid; grid-template: repeat(3, 16px) / repeat(3, 13px); place-items: center; align-content: center; }
.anchor input, .loose input { appearance: none; width: 13px; height: 13px; border: 1px solid #c4c4c4; border-radius: 50%; background: #fafafa; }
.anchor input:checked { border: 4px solid #c0c0c0; }
.rot { grid-row: 1 / 3; grid-column: 11; padding-left: 4px; }
.tall { grid-row: 1 / 3; grid-column: 12; }
.inch { grid-row: 1 / 3; grid-column: 13; width: 22px; height: 22px; margin-left: 6px; border: 1px solid #ccc; border-radius: 3px; background: #fdfdfd; color: #000; }
.c1 { grid-column: 1; }
.c5 { grid-column: 5; }

.fontbox { width: 312px; align-self: stretch; padding: 4px 0 0 4px; }
.fontrow { display: flex; align-items: center; height: 19px; }
.fontrow label { width: 26px; }
.fontrow .wide { width: 185px; height: 17px; }
.fontrow .wide + label { width: 37px; padding-left: 2px; }
.fontrow .num { width: 57px; margin-left: 4px; }
.switches { display: grid; grid-template: repeat(2, 18px) / 94px 93px 80px; padding-left: 27px; margin-top: 1px; }
.switches label, .groupopts label, .jobleft label { display: flex; align-items: center; gap: 5px; white-space: nowrap; }
.sw { appearance: none; flex: none; width: 16px; height: 10px; border: 1px solid #222; border-radius: 3px; background: linear-gradient(90deg, #c8c8c8 0 6px, #222 6px 7px, #2c2c2c 7px); }
.sw.half { background: linear-gradient(90deg, #777 0 7px, #222 7px 8px, #ddd 8px); }
.sw.on { background: linear-gradient(90deg, #14d814 0 7px, #222 7px 8px, #e4efe4 8px); }
.sw.red { background: linear-gradient(90deg, #ddd 0 6px, #222 6px 7px, #900 7px); }
.spacing { display: grid; grid-template: repeat(2, 25px) / 42px 55px 39px 58px 112px; align-items: center; padding: 2px 0 0 13px; }
.spacing .num + label { padding-left: 4px; white-space: nowrap; }
.offset { display: flex; align-items: center; gap: 2px; padding-left: 4px; }
.offset .num { width: 72px; }
.pair, .aligns { padding-left: 2px; display: flex; }
.groupopts { display: grid; grid-template-rows: 23px 23px; padding: 2px 0 0 10px; width: 138px; color: #000; }
.padding { display: grid; grid-template-rows: 23px 23px; align-items: center; color: #000; width: 48px; padding-top: 2px; }

.work { display: flex; flex: 1; min-height: 0; }
.palette { width: 62px; flex: none; border-right: 1px solid #b4b4b4; border-bottom: 1px solid #b4b4b4; padding: 4px 0 0 0; display: flex; flex-direction: column; }
.palette .tool { margin-left: 12px; }
.hgrip { height: 2px; margin: 0 4px 4px 1px; background: repeating-linear-gradient(90deg, #bbb 0 2px, transparent 2px 5px); }
.hgrip.low { margin-top: 3px; }
.rule { height: 1px; background: #b4b4b4; margin-top: 2px; }
.hsep { height: 1px; margin: 3px 4px 2px 2px; background: #d0d0d0; }
.tool.active { background: #cce8ff; border-color: #99d1ff; }
.glyph { font: 900 20px/24px "DejaVu Sans", sans-serif; }
.radius { color: #777; padding-left: 10px; }
.palette .num { color: #777; margin: 1px 4px 0 5px; }

.canvas { flex: 1; min-width: 0; background: #f8f8f8; margin-bottom: 4px; }
.canvas svg { display: block; }
#grid line { stroke: #dedede; }
#grid text { fill: #777; font-size: 12px; }
.outline { fill: none; stroke: #111; }
.tree { fill: #00a000; }
.park { fill: #808080; font: bold 33px "DejaVu Sans", sans-serif; }
.park tspan { font-size: 29px; }
.state { fill: #0000a0; font: bold 68px "DejaVu Serif", serif; }
.state tspan { font-size: 60px; }

.docks { width: 421px; flex: none; padding-left: 7px; overflow: hidden; }
.inner { width: 418px; height: 100%; display: flex; flex-direction: column; }
.docktitle { flex: none; display: flex; align-items: center; justify-content: space-between; height: 22px; padding: 0 6px; color: #fff; background: linear-gradient(90deg, #000, #c63232 64%, #dc7830 98%); }
.docktitle span { display: flex; gap: 12px; }
.cuts { display: flex; gap: 3px; flex: none; padding-left: 1px; }
.tablebox { width: 389px; height: 479px; flex: none; background: #fff; border: 1px solid #828790; }
table { width: 100%; table-layout: fixed; border-collapse: collapse; }
th { height: 24px; padding: 0 0 0 5px; text-align: left; font-weight: 400; border-right: 1px solid #e5e5e5; }
td { height: 24px; padding: 0; white-space: nowrap; }
td:first-child, td:nth-child(4) { padding-left: 4px; }
.sel { background: #d9d9d9; }
.k1 { width: 29px; } .k2 { width: 38px; } .k3 { width: 76px; } .k4 { width: 65px; } .k5 { width: 48px; } .k6 { width: 39px; }
td select { width: 75px; height: 24px; display: block; }
td:nth-child(n+5) { padding-right: 4px; }
td .sw { display: block; margin: 0 auto; }
.chip { display: block; width: 30px; height: 20px; margin: 0 auto; font-weight: 400; line-height: 19px; text-align: center; color: #ddd; }
.c00 { background: #000; } .c16 { background: #808080; } .c09 { background: #0020b0; } .c11 { background: #00a000; }
.side { flex: 1; padding-top: 54px; display: flex; flex-direction: column; gap: 3px; }
.btn { display: flex; align-items: center; justify-content: center; gap: 4px; border: 1px solid #d0d0d0; border-bottom-color: #bbb; border-radius: 3px; background: #fdfdfd; white-space: nowrap; }
.btn svg { width: 16px; height: 16px; flex: none; }
.side .btn { height: 51px; }
.side .btn svg { width: 12px; height: 12px; }
.side .btn .bin { width: 14px; height: 16px; }
.side .mid { margin-top: 52px; }
.params { display: grid; grid-template: repeat(3, 19px) / 188px 62px 75px 69px; column-gap: 6px; align-items: center; text-align: right; margin: 2px 0 3px 1px; padding-top: 2px; height: 61px; flex: none; border: 1px solid #dcdcdc; white-space: nowrap; }
.colour { width: 62px; height: 18px; background: #0000a0; border: 1px solid #000; }
.params .num { width: 60px; }
.params .num:nth-child(4n) { width: 67px; }
.tabs { display: flex; flex: none; height: 20px; padding-left: 1px; }
.tabs button { height: 19px; border: 1px solid #e4e4e4; border-top-color: #a0a0a0; background: #f3f3f3; white-space: nowrap; }
.tabs .cur { height: 20px; background: #fafafa; border-color: #e4e4e4; }
.tabs i { flex: 1; border-top: 1px solid #a0a0a0; }
.four { margin-bottom: 5px; }
.four button:nth-child(1) { width: 88px; } .four button:nth-child(2) { width: 61px; } .four button:nth-child(3) { width: 99px; } .four button:nth-child(4) { width: 85px; }
.two { margin-top: auto; margin-bottom: 1px; }
.two button { width: 50px; } .two button + button { width: 55px; }
.status { height: 22px; line-height: 22px; flex: none; }
.big { display: grid; gap: 5px; height: 58px; margin: 0 0 3px 2px; flex: none; }
.three { grid-template-columns: repeat(3, 1fr); }
.quad { grid-template-columns: repeat(4, 1fr); }
.origin { display: grid; grid-template: 22px / 96px 97px 1fr 107px; column-gap: 7px; align-items: center; margin-left: 2px; flex: none; }
.origin .btn { height: 22px; }
.origin label { text-align: right; }
.green { color: #0a4a0a; }
.job { display: flex; margin-left: 1px; flex: none; height: 105px; }
.jobleft { width: 210px; display: grid; grid-template-rows: 20px 20px 25px; align-content: start; padding-top: 38px; }
.jobright { flex: 1; display: grid; grid-template-rows: 52px 22px 21px; row-gap: 2px; padding-top: 2px; }
.jobo { display: grid; grid-template-columns: 97px 1fr; column-gap: 8px; align-items: center; text-align: right; }
.loose { grid-area: auto; height: 52px; grid-template: repeat(3, 16px) / repeat(3, 33px); place-items: center start; margin-right: -6px; }
.muted { color: #777; }
.devices { display: grid; grid-template: 21px / 72px 167px 1fr; column-gap: 7px; margin-left: 2px; flex: none; }
.devices select, .devices .btn { height: 21px; }
.swatches { display: flex; flex: none; height: 10px; padding-left: 7px; border-top: 1px solid #fff; overflow: hidden; }
.swatch { width: 31px; height: 20px; flex: none; padding: 4px 3px 0; }
.swatch i { display: block; height: 16px; }
.picked { background: #cce8ff; border: 1px solid #99d1ff; border-radius: 3px; padding: 4px 2px 0; margin-top: 1px; }
.cursor { position: absolute; left: 19px; top: 64px; }
```
